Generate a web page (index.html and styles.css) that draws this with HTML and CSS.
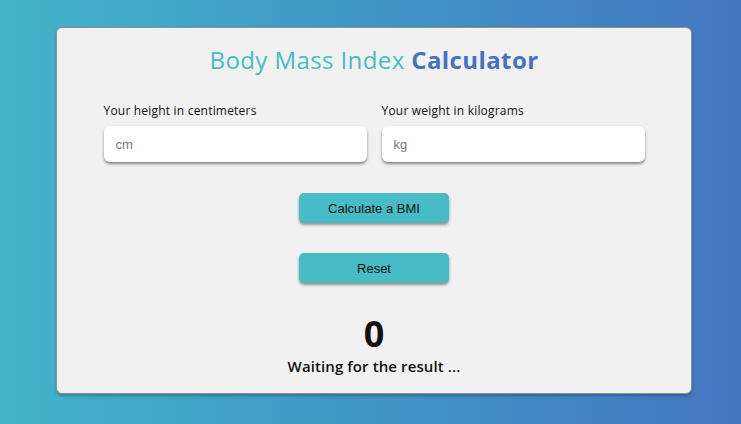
FILE: index.html
```html
<!DOCTYPE html>
<html lang="en">
<head>
    <meta charset="UTF-8">
    <meta name="viewport" content="width=device-width, initial-scale=1.0">
    <title>BMI Calculator</title>
    <link rel="stylesheet" href="styles.css">
</head>
<body>
    <div id="container">
        <h1><span class="light">Body Mass Index</span> <span class="bold">Calculator</span></h1>
        <div class="input-row">
            <div class="field">
                <label for="height">Your height in centimeters</label>
                <input id="height" type="text" placeholder="cm">
            </div>
            <div class="field">
                <label for="weight">Your weight in kilograms</label>
                <input id="weight" type="text" placeholder="kg">
            </div>
        </div>
        <button class="btn">Calculate a BMI</button>
        <button class="btn">Reset</button>
        <div id="result">0</div>
        <div id="message">Waiting for the result ...</div>
    </div>
</body>
</html>
```

FILE: styles.css
```css
html, body {
    margin: 0;
    height: 100%;
}
body {
    background: linear-gradient(90deg, #43b5c9 0%, #3f95c6 50%, #4477c1 100%);
    font-family: "Open Sans", sans-serif;
    padding-top: 27px;
    box-sizing: border-box;
}
#container {
    width: 634px;
    height: 365px;
    margin-left: 56px;
    background-color: #f1f1f1;
    border: 1px solid #8f8f8f;
    border-radius: 6px;
    box-shadow: 0 2px 3px rgba(0, 0, 0, 0.25);
    display: flex;
    flex-direction: column;
    align-items: center;
}
h1 {
    margin: 17px 0 0;
    font-size: 24px;
    line-height: 30px;
    font-weight: 400;
    letter-spacing: 0.4px;
}
.light {
    color: #45bdc8;
}
.bold {
    color: #4571c3;
    font-weight: 700;
}
.input-row {
    display: flex;
    gap: 15px;
    margin-top: 28px;
}
.field {
    display: flex;
    flex-direction: column;
}
label {
    font-size: 12px;
    line-height: 16px;
    color: #111;
    margin-bottom: 7px;
    letter-spacing: 0.2px;
}
input {
    width: 263px;
    height: 36px;
    box-sizing: border-box;
    border: none;
    border-radius: 6px;
    background-color: #fff;
    box-shadow: 0 2px 3px rgba(0, 0, 0, 0.45);
    padding: 0 12px;
    font-family: "Liberation Sans", Arial, sans-serif;
    font-size: 13px;
}
input::placeholder {
    color: #777;
}
.btn {
    width: 150px;
    height: 30px;
    margin-top: 31px;
    border: none;
    border-radius: 5px;
    background-color: #47bcc6;
    box-shadow: 0 2px 3px rgba(0, 0, 0, 0.4);
    font-family: "Liberation Sans", Arial, sans-serif;
    font-size: 13px;
    color: #111;
}
.btn + .btn {
    margin-top: 30px;
}
#result {
    margin-top: 31px;
    font-size: 36px;
    line-height: 40px;
    font-weight: 700;
    color: #111;
}
#message {
    margin-top: 2px;
    font-size: 15px;
    line-height: 20px;
    font-weight: 600;
    color: #111;
    letter-spacing: 0.1px;
}
```
